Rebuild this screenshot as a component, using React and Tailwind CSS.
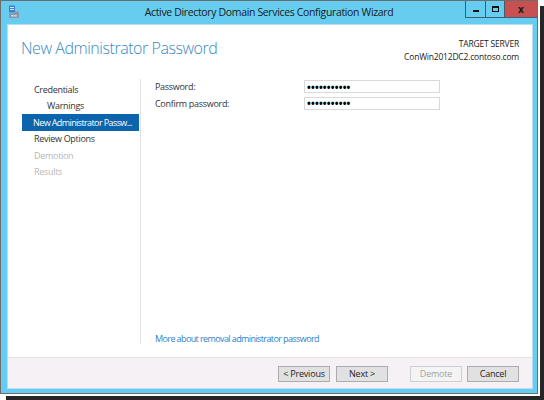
import React from "react";

const font = { fontFamily: '"Open Sans", "Noto Sans", sans-serif' };

function AppIcon() {
  return (
    <svg width="12" height="14" viewBox="0 0 12 14">
      <rect x="1" y="0.5" width="6" height="7" fill="#3b7fd0" />
      <rect x="2" y="2" width="4" height="1" fill="#dbe9fb" />
      <rect x="2" y="4" width="4" height="1" fill="#dbe9fb" />
      <path d="M1 8.5 L5 8.5 L7 6.5 L11 6.5 L11 13 L1 13 Z" fill="#8a96a8" />
      <rect x="3" y="10" width="6" height="1.5" fill="#c9d1dc" />
    </svg>
  );
}

function NavItem({ children, state, indent }) {
  if (state === "active") {
    return (
      <div className="h-[16.5px] ml-[14px] mr-[1px] bg-[#0c64ad] text-white flex items-center pl-[11px] whitespace-nowrap overflow-hidden tracking-[-0.6px]">
        {children}
      </div>
    );
  }
  return (
    <div
      className={`h-[16.5px] flex items-center whitespace-nowrap ${indent ? "pl-[39px]" : "pl-[26px]"} ${
        state === "disabled" ? "text-[#b9b9b9]" : "text-[#333333]"
      }`}
    >
      {children}
    </div>
  );
}

function Btn({ children, disabled }) {
  return (
    <div
      className={`w-[52px] h-[16px] flex items-center justify-center border text-[9px] tracking-[-0.2px] ${
        disabled
          ? "border-[#cfcfcf] bg-[#f4f4f4] text-[#a3a3a3]"
          : "border-[#acacac] bg-[#e1e1e1] text-[#1e1e1e]"
      }`}
    >
      {children}
    </div>
  );
}

function PwField() {
  return (
    <div className="w-[136px] h-[13px] border border-[#d9d9d9] bg-white flex items-center pl-[2px] text-[10px] leading-none text-black tracking-[0.2px] font-bold">
      •••••••••••
    </div>
  );
}

export default function App() {
  return (
    <div className="w-[544px] h-[400px] bg-white" style={font}>
      <div className="w-[538px] h-[394px] border border-[#6d6d6d] bg-[#66cdf0] flex flex-col shadow-[2px_2px_0_0_#ffffff,6px_6px_0_0_#262626]">
        {/* title bar */}
        <div className="h-[23px] flex items-start relative">
          <div className="pl-[7px] pt-[4px]">
            <AppIcon />
          </div>
          <div className="absolute left-0 right-0 top-[5px] text-center text-[10.5px] tracking-[-0.35px] text-[#1a1a1a] leading-[13px] pointer-events-none">
            Active Directory Domain Services Configuration Wizard
          </div>
          <div className="ml-auto flex h-[17px] border-l border-b border-[#3f5f6e]">
            <div className="w-[20px] h-full flex items-end justify-center pb-[5px] border-r border-[#3f5f6e]">
              <div className="w-[6px] h-[2px] bg-[#111]" />
            </div>
            <div className="w-[19px] h-full flex items-center justify-center border-r border-[#3f5f6e]">
              <div className="w-[7px] h-[6px] border border-[#111] border-t-2" />
            </div>
            <div className="w-[32px] h-full bg-[#c75050] flex items-center justify-center text-[10px] font-bold text-[#1a1a1a] leading-none pb-[1px]">
              x
            </div>
          </div>
        </div>
        {/* client */}
        <div className="flex-1 ml-[6px] mr-[4px] mb-[4px] bg-white border border-[#b9dfee] flex flex-col">
          {/* header */}
          <div className="h-[52px] flex justify-between shrink-0">
            <div className="pl-[13px] pt-[13px] text-[16px] font-light tracking-[-0.45px] text-[#3a88c3] leading-[20px]">
              New Administrator Password
            </div>
            <div className="pr-[13px] pt-[12px] text-right text-[8.5px] tracking-[-0.2px] text-[#222] leading-[13px]">
              <div>TARGET SERVER</div>
              <div>ConWin2012DC2.contoso.com</div>
            </div>
          </div>
          {/* body */}
          <div className="flex-1 flex min-h-0">
            <div className="w-[133px] shrink-0 mt-[2px] mb-[13px] border-r border-[#e2e2e2] pt-[2px] text-[9px] tracking-[-0.3px]">
              <NavItem>Credentials</NavItem>
              <NavItem indent>Warnings</NavItem>
              <NavItem state="active">New Administrator Passw...</NavItem>
              <NavItem>Review Options</NavItem>
              <NavItem state="disabled">Demotion</NavItem>
              <NavItem state="disabled">Results</NavItem>
            </div>
            <div className="flex-1 flex flex-col pl-[14px] pt-[3px] text-[9px] tracking-[-0.3px] text-[#333]">
              <div className="flex flex-col gap-[3px]">
                <div className="flex items-center">
                  <div className="w-[149px]">Password:</div>
                  <PwField />
                </div>
                <div className="flex items-center">
                  <div className="w-[149px]">Confirm password:</div>
                  <PwField />
                </div>
              </div>
              <div className="mt-auto pb-[12px] text-[#2f7fcc] leading-[13px] tracking-[-0.6px]">
                More about removal administrator password
              </div>
            </div>
          </div>
          {/* footer */}
          <div className="h-[31px] shrink-0 border-t border-[#e4dfe4] bg-[#f5f1f5] flex items-start justify-end pt-[8px] pr-[13px]">
            <div className="flex">
              <Btn>&lt; Previous</Btn>
              <div className="w-[6px]" />
              <Btn>Next &gt;</Btn>
              <div className="w-[22px]" />
              <Btn disabled>Demote</Btn>
              <div className="w-[5px]" />
              <Btn>Cancel</Btn>
            </div>
          </div>
        </div>
      </div>
    </div>
  );
}
